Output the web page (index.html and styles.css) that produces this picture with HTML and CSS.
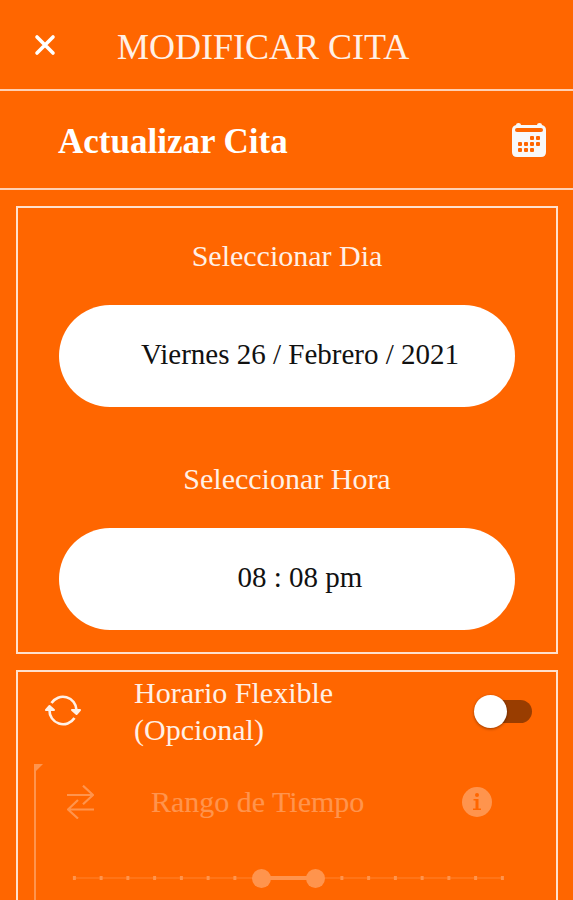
FILE: index.html
```html
<!DOCTYPE html>
<html lang="es">
<head>
  <meta charset="UTF-8" />
  <meta name="viewport" content="width=device-width, initial-scale=1.0"/>
  <title>Modificar Cita</title>
  <link rel="stylesheet" href="styles.css">
</head>
<body>
  <header class="topbar">
    <button type="button" class="close" aria-label="Cerrar">
      <svg width="22" height="22" viewBox="0 0 22 22">
        <path d="M3 3L19 19M19 3L3 19" fill="none" stroke="currentColor" stroke-width="3.6" stroke-linecap="round"/>
      </svg>
    </button>
    <h1>MODIFICAR CITA</h1>
  </header>

  <div class="subheader">
    <h2>Actualizar Cita</h2>
    <svg width="34" height="34" viewBox="0 0 34 34">
      <path d="M4 2Q4 0 6.500 0Q9 0 9 2H25Q25 0 27.500 0Q30 0 30 2Q34 3 34 7V29Q34 34 29 34H5Q0 34 0 29V7Q0 3 4 2Z" fill="#f8f8f8"/>
      <rect x="3" y="5" width="28" height="4" rx="2" fill="#ff6600"/>
      <g fill="#ff6600">
        <rect x="18" y="13" width="4" height="4" rx="1"/><rect x="24" y="13" width="4" height="4" rx="1"/>
        <rect x="6" y="19" width="4" height="4" rx="1"/><rect x="12" y="19" width="4" height="4" rx="1"/><rect x="18" y="19" width="4" height="4" rx="1"/><rect x="24" y="19" width="4" height="4" rx="1"/>
        <rect x="6" y="25" width="4" height="4" rx="1"/><rect x="12" y="25" width="4" height="4" rx="1"/><rect x="18" y="25" width="4" height="4" rx="1"/>
      </g>
    </svg>
  </div>

  <main>
    <section class="box fields">
      <div class="field">
        <label for="dia">Seleccionar Dia</label>
        <input type="text" id="dia" value="Viernes 26 / Febrero / 2021" readonly>
      </div>
      <div class="field">
        <label for="hora">Seleccionar Hora</label>
        <input type="text" id="hora" value="08 : 08 pm" readonly>
      </div>
    </section>

    <section class="box flexible">
      <div class="flex-row">
        <svg width="36" height="32" viewBox="0 0 36 32">
          <g fill="none" stroke="currentColor" stroke-width="2.6">
            <path d="M6.500 8A13.600 13.600 0 0 1 31.500 15"/>
            <path d="M4.500 15A13.600 13.600 0 0 0 29.500 23"/>
          </g>
          <path d="M27 15H35L31.500 19Z" fill="currentColor" stroke="currentColor" stroke-width="2" stroke-linejoin="round"/>
          <path d="M1 15H9L4.500 11Z" fill="currentColor" stroke="currentColor" stroke-width="2" stroke-linejoin="round"/>
        </svg>
        <label for="flexible">Horario Flexible<br>(Opcional)</label>
        <input type="checkbox" id="flexible" class="switch">
      </div>

      <div class="range-panel">
        <div class="range-head">
          <svg width="27" height="34" viewBox="0 0 27 34">
            <path d="M0 10H26M16 .7L26 10L16 19.3M27 24.5H1M11 15L1 24.5L11 33.5" fill="none" stroke="currentColor" stroke-width="2.2"/>
          </svg>
          <span>Rango de Tiempo</span>
          <button type="button" class="info" aria-label="Información" disabled>
            <svg width="30" height="30" viewBox="0 0 30 30">
              <circle cx="15" cy="15" r="15" fill="#ffffff"/>
              <circle cx="15" cy="8" r="2" fill="#ff6600"/>
              <path d="M11.500 12H16.500V21.500H19V23H11V21.500H13.500V13.500H11.500Z" fill="#ff6600"/>
            </svg>
          </button>
        </div>
        <div class="range">
          <div class="ticks"></div>
          <div class="selected"></div>
          <input type="range" min="0" max="16" value="7" aria-label="Desde" disabled>
          <input type="range" min="0" max="16" value="9" aria-label="Hasta" disabled>
        </div>
      </div>
    </section>
  </main>
</body>
</html>
```

FILE: styles.css
```css
* {
  box-sizing: border-box;
}
body {
  font-family: "Liberation Serif", serif;
  font-size: 30px;
  line-height: 36px;
  background: #ff6600;
  color: #fff0e6;
  margin: 0;
  height: 100vh;
  overflow: hidden;
  display: flex;
  flex-direction: column;
}
h1, h2 {
  margin: 0;
}
svg {
  display: block;
  flex-shrink: 0;
}
button {
  background: none;
  border: none;
  padding: 0;
  color: white;
}
.topbar {
  display: flex;
  align-items: center;
  gap: 61px;
  padding: 22px 34px;
  border-bottom: 2px solid #ffd0b3;
}
.topbar h1 {
  font-size: 36px;
  line-height: 40px;
  font-weight: normal;
  padding-top: 5px;
}
.subheader {
  display: flex;
  align-items: center;
  justify-content: space-between;
  padding: 28px 27px 28px 58px;
  border-bottom: 2px solid #ffd0b3;
}
.subheader h2 {
  font-size: 35px;
  line-height: 36px;
  padding-top: 5px;
  color: white;
}
main {
  flex: 1;
  display: flex;
  flex-direction: column;
  gap: 16px;
  padding: 16px 15px 0 16px;
}
.box {
  border: 2px solid #ffe0cc;
}
.fields {
  display: flex;
  flex-direction: column;
  gap: 54px;
  padding: 30px 41px 22px;
}
.field {
  display: flex;
  flex-direction: column;
  gap: 31px;
  text-align: center;
}
.field input {
  width: 100%;
  height: 102px;
  padding: 0 0 4px 26px;
  border: none;
  border-radius: 51px;
  background: white;
  color: #111;
  font-family: inherit;
  font-size: 29px;
  text-align: center;
}
.flexible {
  flex: 1;
  display: flex;
  flex-direction: column;
  gap: 16px;
  border-bottom: none;
  padding-top: 2px;
}
.flex-row {
  display: flex;
  align-items: center;
  padding: 0 24px 0 27px;
}
.flex-row label {
  flex: 1;
  padding-left: 53px;
  line-height: 37px;
}
.switch {
  appearance: none;
  display: grid;
  align-items: center;
  width: 58px;
  height: 34px;
  margin: 0;
}
.switch::before,
.switch::after {
  content: "";
  grid-area: 1 / 1;
}
.switch::before {
  height: 23px;
  margin-left: 6px;
  border-radius: 12px;
  background: #993d00;
}
.switch::after {
  width: 33px;
  height: 33px;
  border-radius: 50%;
  background: white;
  box-shadow: 0 1px 3px rgba(0, 0, 0, 0.4);
}
.switch:checked::after {
  justify-self: end;
}

.range-panel {
  flex: 1;
  position: relative;
  margin-left: 16px;
  padding-top: 20px;
  border-left: 2px solid white;
  color: white;
  opacity: 0.3;
}
.range-panel::before {
  content: "";
  position: absolute;
  top: 0;
  left: 0;
  border-top: 7px solid white;
  border-right: 7px solid transparent;
}
.range-head {
  display: flex;
  align-items: center;
  padding: 0 64px 0 31px;
}
.range-head span {
  flex: 1;
  padding-left: 57px;
}
.range {
  display: grid;
  align-items: center;
  margin: 48px 44px 0 29px;
}
.range > * {
  grid-area: 1 / 1;
}
.ticks {
  height: 4px;
  margin: 0 -4px;
  background:
    radial-gradient(circle, white 2px, transparent 2px) 0 0 / calc(100% / 17) 100%,
    linear-gradient(rgba(255, 255, 255, 0.3), rgba(255, 255, 255, 0.3)) center / 94% 2px no-repeat;
}
.selected {
  height: 4px;
  margin: 0 44%;
  background: white;
}
.range input {
  appearance: none;
  width: 100%;
  height: 20px;
  margin: 0;
  background: none;
  pointer-events: none;
}
.range input::-webkit-slider-thumb {
  appearance: none;
  width: 19px;
  height: 19px;
  border-radius: 50%;
  background: white;
  pointer-events: auto;
}
```
